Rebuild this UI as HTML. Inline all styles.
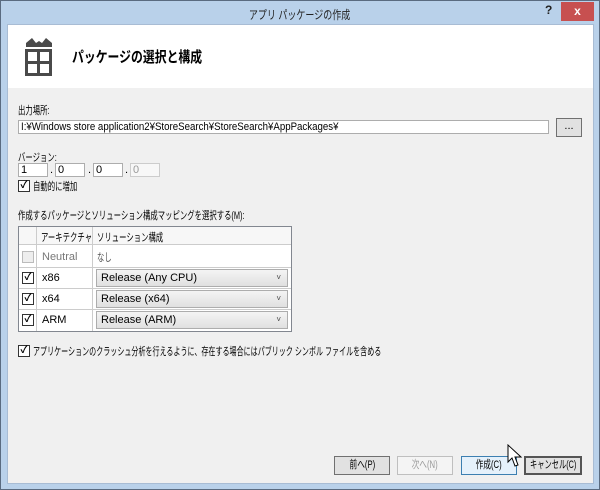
<!DOCTYPE html>
<html><head><meta charset="utf-8"><style>
*{margin:0;padding:0;box-sizing:border-box}
body{width:600px;height:490px;position:relative;overflow:hidden;background:#b9d1ea;font-family:"Liberation Sans","Noto Sans CJK JP",sans-serif;font-size:11px;color:#000}
.a{position:absolute;white-space:nowrap}
.n{transform:scaleX(.67);transform-origin:0 50%}
.c{display:inline-block;transform:scaleX(.7);transform-origin:50% 50%;margin:0 -20px}
.frame{left:0;top:0;width:600px;height:490px;border:1px solid #5a6b80}
.client{left:7px;top:24px;width:587px;height:460px;background:#f0f0f0;border:1px solid #a8bcd4}
.hdr{left:8px;top:25px;width:585px;height:63px;background:#fff}
.tb{background:#fff;border:1px solid #adadad;height:14px;font-size:11px;line-height:12px;padding-left:2px}
.btn{background:#e1e1e1;border:1px solid #707070;height:19px;text-align:center;line-height:17px;font-size:11px;overflow:hidden}
.cb{width:12px;height:12px;border:1px solid #333;background:#fff;font-size:10px;line-height:10px;text-align:center;font-weight:bold}
.dd{left:96px;width:192px;height:18px;border:1px solid #adadad;background:linear-gradient(#f4f4f4,#e0e0e0);padding-left:4px;line-height:16px;font-size:11px}
.dd:after{content:"\02C5";position:absolute;right:6px;top:0;font-size:8px;color:#444}
</style></head><body>
<div class="a frame"></div>
<div class="a" style="left:0;width:600px;text-align:center;top:6px;font-size:12px;color:#222"><span class="c" style="transform:scaleX(.75)">アプリ パッケージの作成</span></div>
<div class="a" style="left:545px;top:3px;font-weight:bold;font-size:12px;color:#222">?</div>
<div class="a" style="left:561px;top:2px;width:33px;height:19px;background:#c75050;color:#fff;text-align:center;line-height:18px;font-weight:bold;font-size:12px">x</div>
<div class="a client"></div>
<div class="a hdr"></div>
<svg class="a" style="left:24px;top:37px" width="30" height="39"><polygon points="2,6 8,1 12,6 15,4 18,6 22,1 28,6 28,10 2,10" fill="#4a4a4a"/><rect x="1" y="12" width="27" height="27" fill="#4a4a4a"/><rect x="4" y="15" width="9" height="9" fill="#fff"/><rect x="16" y="15" width="9" height="9" fill="#fff"/><rect x="4" y="27" width="9" height="9" fill="#fff"/><rect x="16" y="27" width="9" height="9" fill="#fff"/></svg>
<div class="a n" style="left:72px;top:46px;font-size:15px;font-weight:bold;transform:scaleX(.79)">パッケージの選択と構成</div>
<div class="a n" style="left:18px;top:102px">出力場所:</div>
<div class="a tb" style="left:18px;top:120px;width:531px"><span style="display:inline-block;transform:scaleX(.88);transform-origin:0 50%">I:¥Windows store application2¥StoreSearch¥StoreSearch¥AppPackages¥</span></div>
<div class="a btn" style="left:556px;top:118px;width:26px;line-height:14px">...</div>
<div class="a n" style="left:18px;top:149px">バージョン:</div>
<div class="a tb" style="left:18px;top:163px;width:30px">1</div>
<div class="a" style="left:50px;top:164px">.</div>
<div class="a tb" style="left:55px;top:163px;width:30px">0</div>
<div class="a" style="left:88px;top:164px">.</div>
<div class="a tb" style="left:93px;top:163px;width:30px">0</div>
<div class="a" style="left:125px;top:164px">.</div>
<div class="a tb" style="left:130px;top:163px;width:30px;color:#999;background:#f7f7f7;border-color:#ccc">0</div>
<div class="a cb" style="left:18px;top:180px">✓</div>
<div class="a n" style="left:33px;top:178px">自動的に増加</div>
<div class="a n" style="left:18px;top:207px">作成するパッケージとソリューション構成マッピングを選択する(M):</div>
<div class="a" style="left:18px;top:226px;width:274px;height:106px;border:1px solid #828790;background:#fff"></div>
<div class="a" style="left:19px;top:227px;width:272px;height:18px;background:#f7f7f7;border-bottom:1px solid #ccc"></div>
<div class="a" style="left:36px;top:227px;width:1px;height:104px;background:#ccc"></div>
<div class="a" style="left:92px;top:227px;width:1px;height:104px;background:#ccc"></div>
<div class="a" style="left:19px;top:267px;width:272px;height:1px;background:#ccc"></div>
<div class="a" style="left:19px;top:288px;width:272px;height:1px;background:#ccc"></div>
<div class="a" style="left:19px;top:309px;width:272px;height:1px;background:#ccc"></div>
<div class="a n" style="left:41px;top:229px">アーキテクチャ</div>
<div class="a n" style="left:97px;top:229px">ソリューション構成</div>
<div class="a cb" style="left:22px;top:251px;border-color:#bbb;background:#eee"></div>
<div class="a" style="left:42px;top:251px;color:#777">Neutral</div>
<div class="a n" style="left:97px;top:249px;color:#555">なし</div>
<div class="a cb" style="left:22px;top:272px">✓</div><div class="a" style="left:42px;top:272px">x86</div>
<div class="a dd" style="top:269px">Release (Any CPU)</div>
<div class="a cb" style="left:22px;top:293px">✓</div><div class="a" style="left:42px;top:293px">x64</div>
<div class="a dd" style="top:290px">Release (x64)</div>
<div class="a cb" style="left:22px;top:314px">✓</div><div class="a" style="left:42px;top:314px">ARM</div>
<div class="a dd" style="top:311px">Release (ARM)</div>
<div class="a cb" style="left:18px;top:345px">✓</div>
<div class="a n" style="left:33px;top:343px;transform:scaleX(.64)">アプリケーションのクラッシュ分析を行えるように、存在する場合にはパブリック シンボル ファイルを含める</div>
<div class="a btn" style="left:334px;top:456px;width:56px"><span class="c">前へ(P)</span></div>
<div class="a btn" style="left:397px;top:456px;width:56px;color:#999;border-color:#bfbfbf;background:#f4f4f4"><span class="c">次へ(N)</span></div>
<div class="a btn" style="left:461px;top:456px;width:56px;border-color:#3c7fb1;background:#e5f1fb"><span class="c">作成(C)</span></div>
<div class="a btn" style="left:524px;top:456px;width:58px;border-width:2px;border-color:#555;line-height:15px"><span class="c" style="transform:scaleX(.66)">キャンセル(C)</span></div>
<svg class="a" style="left:507px;top:444px" width="16" height="24"><path d="M1,1 L1,18 L5,14 L8,22 L11,21 L8,13 L14,13 Z" fill="#fff" stroke="#000" stroke-width="1"/></svg>
</body></html>
